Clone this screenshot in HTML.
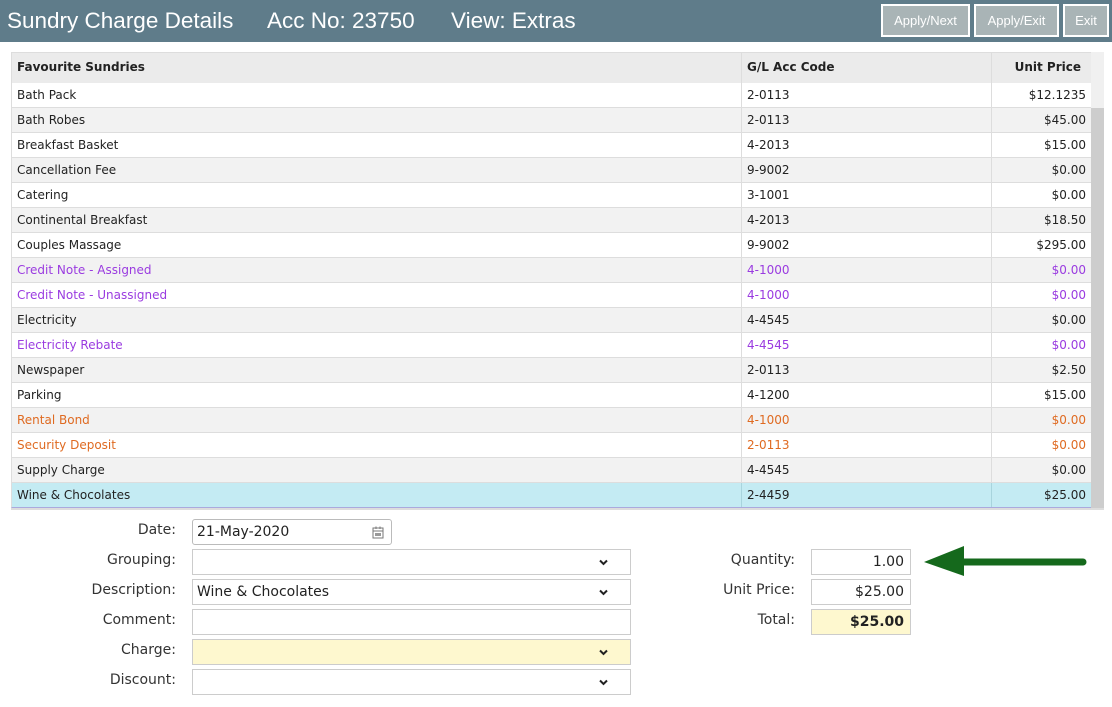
<!DOCTYPE html>
<html><head><meta charset="utf-8"><style>
*{box-sizing:border-box;margin:0;padding:0}
body{width:1112px;height:707px;background:#fff;position:relative;overflow:hidden;font-family:"DejaVu Sans",Verdana,sans-serif;font-size:12px;color:#222}
.hdr{position:absolute;left:0;top:0;width:1112px;height:42px;background:#5f7c8a}
.t{position:absolute;top:8px;color:#fff;font-family:"Liberation Sans",sans-serif;font-size:22.5px}
.btn{position:absolute;top:4px;height:33px;background:#a9b4b6;border:2px solid #fff;color:#fff;font-family:"Liberation Sans",sans-serif;font-size:13px;text-align:center;line-height:29px}
.row{position:absolute;left:11px;width:1080px;height:25px;border-bottom:1px solid #ddd;border-left:1px solid #ddd}
.row div{position:absolute;top:0;height:24px;line-height:25px}
.c1{left:5px}.c2{left:729px;border-left:1px solid #ddd;padding-left:5px;width:251px}.c3{left:979px;border-left:1px solid #ddd;width:100px;text-align:right;padding-right:5px}
.p{color:#9a3be0}.o{color:#df6a21}
.lbl{position:absolute;font-size:14px;color:#333;text-align:right;font-family:"DejaVu Sans",sans-serif}
.in{position:absolute;height:26px;border:1px solid #ccc;background:#fff;font-size:14px;line-height:24px;padding-left:4px}
.chev{position:absolute;right:22px;top:9px}
</style></head><body>
<div class="hdr">
<div class="t" style="left:7px">Sundry Charge Details</div>
<div class="t" style="left:267px">Acc No: 23750</div>
<div class="t" style="left:451px">View: Extras</div>
<div class="btn" style="left:881px;width:89px">Apply/Next</div>
<div class="btn" style="left:974px;width:85px">Apply/Exit</div>
<div class="btn" style="left:1063px;width:46px">Exit</div>
</div>
<div style="position:absolute;left:1090px;top:52px;width:14px;height:456px;background:#f0f0f0"></div>
<div style="position:absolute;left:1090px;top:108px;width:14px;height:400px;background:#cdcdcd"></div>
<div class="row" style="top:52px;height:32px;background:#ebebeb;border-top:1px solid #ddd;font-weight:bold"><div class="c1" style="line-height:28px;height:30px">Favourite Sundries</div><div class="c2" style="line-height:28px;height:30px">G/L Acc Code</div><div class="c3" style="line-height:28px;height:30px;padding-right:10px">Unit Price</div></div>
<div class="row" style="top:83px;background:#fff"><div class="c1">Bath Pack</div><div class="c2">2-0113</div><div class="c3">$12.1235</div></div>
<div class="row" style="top:108px;background:#f2f2f2"><div class="c1">Bath Robes</div><div class="c2">2-0113</div><div class="c3">$45.00</div></div>
<div class="row" style="top:133px;background:#fff"><div class="c1">Breakfast Basket</div><div class="c2">4-2013</div><div class="c3">$15.00</div></div>
<div class="row" style="top:158px;background:#f2f2f2"><div class="c1">Cancellation Fee</div><div class="c2">9-9002</div><div class="c3">$0.00</div></div>
<div class="row" style="top:183px;background:#fff"><div class="c1">Catering</div><div class="c2">3-1001</div><div class="c3">$0.00</div></div>
<div class="row" style="top:208px;background:#f2f2f2"><div class="c1">Continental Breakfast</div><div class="c2">4-2013</div><div class="c3">$18.50</div></div>
<div class="row" style="top:233px;background:#fff"><div class="c1">Couples Massage</div><div class="c2">9-9002</div><div class="c3">$295.00</div></div>
<div class="row p" style="top:258px;background:#f2f2f2"><div class="c1">Credit Note - Assigned</div><div class="c2">4-1000</div><div class="c3">$0.00</div></div>
<div class="row p" style="top:283px;background:#fff"><div class="c1">Credit Note - Unassigned</div><div class="c2">4-1000</div><div class="c3">$0.00</div></div>
<div class="row" style="top:308px;background:#f2f2f2"><div class="c1">Electricity</div><div class="c2">4-4545</div><div class="c3">$0.00</div></div>
<div class="row p" style="top:333px;background:#fff"><div class="c1">Electricity Rebate</div><div class="c2">4-4545</div><div class="c3">$0.00</div></div>
<div class="row" style="top:358px;background:#f2f2f2"><div class="c1">Newspaper</div><div class="c2">2-0113</div><div class="c3">$2.50</div></div>
<div class="row" style="top:383px;background:#fff"><div class="c1">Parking</div><div class="c2">4-1200</div><div class="c3">$15.00</div></div>
<div class="row o" style="top:408px;background:#f2f2f2"><div class="c1">Rental Bond</div><div class="c2">4-1000</div><div class="c3">$0.00</div></div>
<div class="row o" style="top:433px;background:#fff"><div class="c1">Security Deposit</div><div class="c2">2-0113</div><div class="c3">$0.00</div></div>
<div class="row" style="top:458px;background:#f2f2f2"><div class="c1">Supply Charge</div><div class="c2">4-4545</div><div class="c3">$0.00</div></div>
<div class="row" style="top:483px;background:#c4ebf3;border-bottom:1px solid #aad"><div class="c1">Wine &amp; Chocolates</div><div class="c2" style="border-color:#a8d4dd">2-4459</div><div class="c3" style="border-color:#a8d4dd">$25.00</div></div>
<div style="position:absolute;left:11px;top:508px;width:1093px;height:2px;background:#ddd"></div>

<div class="lbl" style="left:40px;width:136px;top:522px">Date:</div>
<div class="in" style="left:192px;top:519px;width:200px;border-radius:3px;border-color:#bbb">21-May-2020
<svg style="position:absolute;left:179px;top:6px" width="12" height="13" viewBox="0 0 12 13"><rect x="1" y="2" width="10" height="10" fill="none" stroke="#777"/><line x1="1" y1="5" x2="11" y2="5" stroke="#777"/><line x1="4" y1="0.5" x2="4" y2="3" stroke="#777"/><line x1="8" y1="0.5" x2="8" y2="3" stroke="#777"/><rect x="3" y="7" width="6" height="3" fill="#999"/></svg></div>
<div class="lbl" style="left:40px;width:136px;top:552px">Grouping:</div>
<div class="in" style="left:192px;top:549px;width:439px"><svg class="chev" width="9" height="7" viewBox="0 0 9 7"><path d="M1 1.5L4.5 5L8 1.5" fill="none" stroke="#222" stroke-width="2"/></svg></div>
<div class="lbl" style="left:40px;width:136px;top:582px">Description:</div>
<div class="in" style="left:192px;top:579px;width:439px">Wine &amp; Chocolates<svg class="chev" width="9" height="7" viewBox="0 0 9 7"><path d="M1 1.5L4.5 5L8 1.5" fill="none" stroke="#222" stroke-width="2"/></svg></div>
<div class="lbl" style="left:40px;width:136px;top:612px">Comment:</div>
<div class="in" style="left:192px;top:609px;width:439px"></div>
<div class="lbl" style="left:40px;width:136px;top:642px">Charge:</div>
<div class="in" style="left:192px;top:639px;width:439px;background:#fef8cf"><svg class="chev" width="9" height="7" viewBox="0 0 9 7"><path d="M1 1.5L4.5 5L8 1.5" fill="none" stroke="#222" stroke-width="2"/></svg></div>
<div class="lbl" style="left:40px;width:136px;top:672px">Discount:</div>
<div class="in" style="left:192px;top:669px;width:439px"><svg class="chev" width="9" height="7" viewBox="0 0 9 7"><path d="M1 1.5L4.5 5L8 1.5" fill="none" stroke="#222" stroke-width="2"/></svg></div>

<div class="lbl" style="left:660px;width:135px;top:552px">Quantity:</div>
<div class="in" style="left:811px;top:549px;width:100px;text-align:right;padding-right:6px">1.00</div>
<div class="lbl" style="left:660px;width:135px;top:582px">Unit Price:</div>
<div class="in" style="left:811px;top:579px;width:100px;text-align:right;padding-right:6px">$25.00</div>
<div class="lbl" style="left:660px;width:135px;top:612px">Total:</div>
<div class="in" style="left:811px;top:609px;width:100px;text-align:right;padding-right:6px;background:#fef8cf;font-weight:bold">$25.00</div>
<svg style="position:absolute;left:920px;top:544px" width="172" height="36" viewBox="0 0 172 36"><path d="M40 18 H163" stroke="#15691c" stroke-width="7" stroke-linecap="round"/><polygon points="4,18 44,2 44,32" fill="#15691c"/></svg>
</body></html>
